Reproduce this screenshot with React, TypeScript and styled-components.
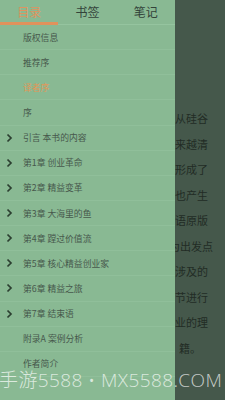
import React from "react";
import styled, { createGlobalStyle } from "styled-components";

const Global = createGlobalStyle`
  html, body { margin: 0; padding: 0; }
  body { width: 225px; height: 400px; overflow: hidden; font-family: "Noto Sans CJK SC", "Noto Sans", sans-serif; }
`;

const Screen = styled.div`
  position: relative;
  width: 225px;
  height: 400px;
  overflow: hidden;
  background: #45584b;
`;

const Page = styled.div`
  display: flex;
  flex-direction: column;
  padding-top: 106px;
`;

const PageLine = styled.div<{ $end: number }>`
  height: 25.5px;
  line-height: 25.5px;
  font-size: 11px;
  color: #222c25;
  white-space: nowrap;
  text-align: right;
  padding-right: ${(p) => p.$end}px;
  overflow: hidden;
`;

const Drawer = styled.div`
  position: absolute;
  left: 0;
  top: 0;
  width: 175px;
  height: 400px;
  background: #89b993;
  display: flex;
  flex-direction: column;
`;

const Tabs = styled.div`
  display: grid;
  grid-template-columns: repeat(3, 1fr);
  height: 25px;
  border-bottom: 1px solid #95c49f;
  box-sizing: border-box;
`;

const Tab = styled.div<{ $active?: boolean }>`
  position: relative;
  display: flex;
  align-items: center;
  justify-content: center;
  font-size: 12px;
  color: ${(p) => (p.$active ? "#df9460" : "#33433a")};
  padding-bottom: 2px;
  &::after {
    content: "";
    display: ${(p) => (p.$active ? "block" : "none")};
    position: absolute;
    left: 0;
    right: 0;
    bottom: -1px;
    height: 3px;
    background: #e0925c;
  }
`;

const Row = styled.div`
  display: flex;
  align-items: center;
  height: 25.15px;
  box-sizing: border-box;
  border-bottom: 1px solid #90bf9a;
  padding-left: 5px;
`;

const Chevron = styled.svg`
  width: 8px;
  height: 10px;
  flex: none;
`;

const Spacer = styled.div`
  width: 8px;
  flex: none;
`;

const Label = styled.span<{ $current?: boolean }>`
  margin-left: 10px;
  font-size: 8.8px;
  color: ${(p) => (p.$current ? "#e29758" : "#47584c")};
`;

const Watermark = styled.div`
  position: absolute;
  left: -1px;
  top: 365px;
  font-family: "Open Sans", "Noto Sans CJK SC", sans-serif;
  font-weight: 300;
  font-size: 19px;
  letter-spacing: 0.4px;
  color: rgba(255, 255, 255, 0.7);
  white-space: nowrap;
`;

const items: { t: string; c?: boolean; cur?: boolean }[] = [
  { t: "版权信息" },
  { t: "推荐序" },
  { t: "译者序", cur: true },
  { t: "序" },
  { t: "引言 本书的内容", c: true },
  { t: "第1章 创业革命", c: true },
  { t: "第2章 精益变革", c: true },
  { t: "第3章 大海里的鱼", c: true },
  { t: "第4章 蹚过价值流", c: true },
  { t: "第5章 核心精益创业家", c: true },
  { t: "第6章 精益之旅", c: true },
  { t: "第7章 结束语", c: true },
  { t: "附录A 案例分析" },
  { t: "作者简介" },
];

const lines: { t: string; e: number }[] = [
  { t: "精益创业的理念从硅谷", e: 17 },
  { t: "兴起，并且变得越来越清", e: 17 },
  { t: "晰，逐渐在全球形成了", e: 17 },
  { t: "广泛的影响，同时也产生", e: 17 },
  { t: "了大量的中文和英语原版", e: 17 },
  { t: "书籍。本书以企业为出发点", e: 12 },
  { t: "全面介绍了书中涉及的", e: 17 },
  { t: "理念，并对每个章节进行", e: 17 },
  { t: "分析，加深读者对企业的理", e: 17 },
  { t: "籍。", e: 24 },
];

export default function App() {
  return (
    <Screen>
      <Global />
      <Page>
        {lines.map((l, i) => (
          <PageLine key={i} $end={l.e}>
            {l.t}
          </PageLine>
        ))}
      </Page>
      <Drawer>
        <Tabs>
          <Tab $active>目录</Tab>
          <Tab>书签</Tab>
          <Tab>笔记</Tab>
        </Tabs>
        {items.map((it, i) => (
          <Row key={i}>
            {it.c ? (
              <Chevron viewBox="0 0 8 10">
                <polyline points="2.5,1.5 6,5 2.5,8.5" fill="none" stroke="#2b3f30" strokeWidth="1.7" />
              </Chevron>
            ) : (
              <Spacer />
            )}
            <Label $current={it.cur}>{it.t}</Label>
          </Row>
        ))}
      </Drawer>
      <Watermark>手游5588 • MX5588.COM</Watermark>
    </Screen>
  );
}
